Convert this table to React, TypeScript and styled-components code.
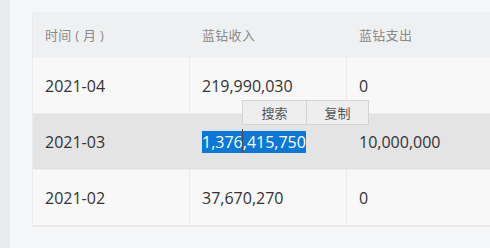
import styled, { createGlobalStyle } from 'styled-components';

const GlobalStyle = createGlobalStyle`
  html, body {
    margin: 0;
    padding: 0;
    overflow: hidden;
    background: #f5f6f7;
    font-family: "Open Sans", "Noto Sans CJK SC", sans-serif;
  }
`;

const StyledPage = styled.div`
  display: flex;
  width: 490px;
  height: 248px;
  overflow: hidden;
`;

const SideStrip = styled.div`
  width: 10px;
  flex-shrink: 0;
  background: #e9ecee;
`;

const Content = styled.div`
  flex: 1;
  padding: 12px 0 0 22px;
  background: #f5f6f7;
`;

const TableWrap = styled.div`
  position: relative;
  width: 500px;
  border: 1px solid #ebebeb;
  border-top: none;
  border-right: none;
`;

const Row = styled.div<{ $kind?: 'head' | 'hover' }>`
  display: grid;
  grid-template-columns: 157px 157px 1fr;
  height: ${p => (p.$kind === 'head' ? 45 : 55)}px;
  background: ${p => (p.$kind === 'head' ? '#eef0f1' : p.$kind === 'hover' ? '#e4e4e4' : '#f8f8f8')};
  border-bottom: 1px solid ${p => (p.$kind === 'head' ? '#eef0f1' : '#ececec')};
`;

const Cell = styled.div<{ $head?: boolean; $divided?: boolean }>`
  display: flex;
  align-items: center;
  padding-left: 12px;
  border-right: 1px solid ${p => (p.$divided ? '#ebebeb' : 'transparent')};
  color: ${p => (p.$head ? '#8a8a8a' : '#333')};
  font-size: ${p => (p.$head ? 13 : 16)}px;
  letter-spacing: ${p => (p.$head ? '0.3px' : '0')};
`;

const Selected = styled.span`
  position: relative;
  background: #0a78d8;
  color: #fff;
  line-height: 22px;
`;

const Caret = styled.span`
  position: absolute;
  left: 40px;
  top: -2px;
  width: 1px;
  height: 24px;
  background: #4a4a4a;
`;

const CtxMenu = styled.div`
  position: absolute;
  left: 209px;
  top: 88px;
  display: flex;
  height: 23px;
  background: #eeeeee;
  border: 1px solid #d4d4d4;
`;

const CtxButton = styled.div<{ $w: number }>`
  width: ${p => p.$w}px;
  display: flex;
  align-items: center;
  justify-content: center;
  font-size: 13px;
  color: #555;
  & + & {
    border-left: 1px solid #d4d4d4;
  }
`;

const rows = [
  { month: '2021-04', income: '219,990,030', out: '0' },
  { month: '2021-03', income: '1,376,415,750', out: '10,000,000', hover: true },
  { month: '2021-02', income: '37,670,270', out: '0' },
];

const App = () => (
  <>
    <GlobalStyle />
    <StyledPage>
      <SideStrip />
      <Content>
        <TableWrap>
          <Row $kind="head">
            <Cell $head>时间 ( 月 )</Cell>
            <Cell $head>蓝钻收入</Cell>
            <Cell $head>蓝钻支出</Cell>
          </Row>
          {rows.map(r => (
            <Row key={r.month} $kind={r.hover ? 'hover' : undefined}>
              <Cell $divided={!r.hover}>{r.month}</Cell>
              <Cell $divided={!r.hover}>
                {r.hover ? (
                  <Selected>
                    {r.income}
                    <Caret />
                  </Selected>
                ) : (
                  r.income
                )}
              </Cell>
              <Cell>{r.out}</Cell>
            </Row>
          ))}
          <CtxMenu>
            <CtxButton $w={63}>搜索</CtxButton>
            <CtxButton $w={61}>复制</CtxButton>
          </CtxMenu>
        </TableWrap>
      </Content>
    </StyledPage>
  </>
);

export default App;
